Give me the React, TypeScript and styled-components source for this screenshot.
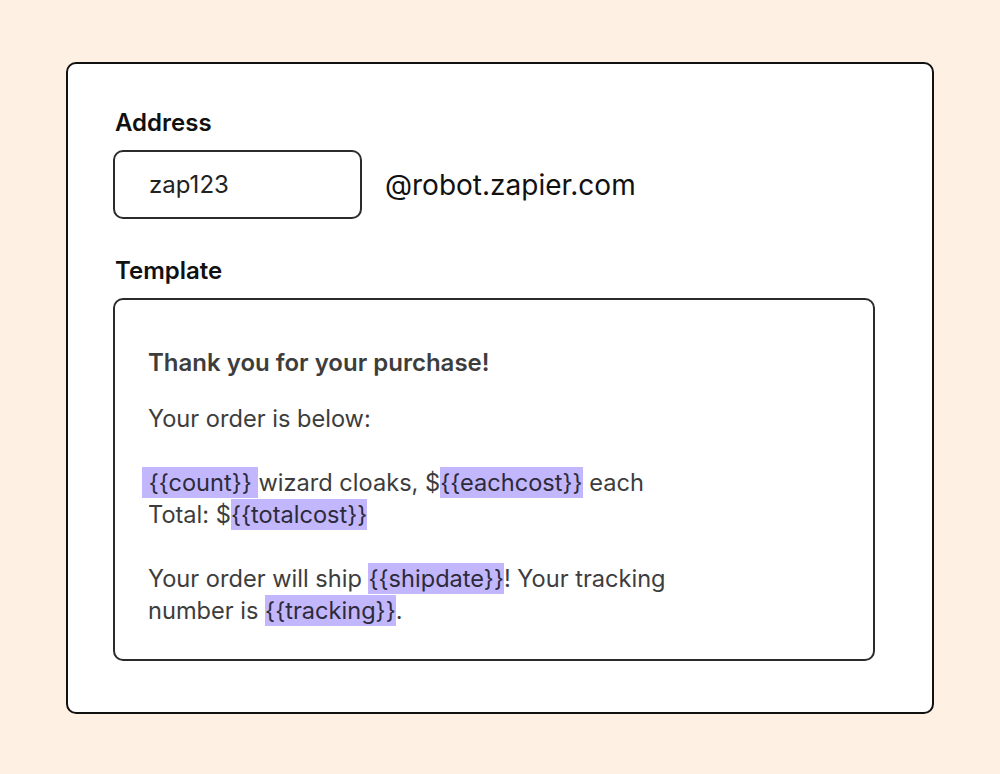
import styled, { createGlobalStyle } from 'styled-components';

const GlobalStyle = createGlobalStyle`
  html, body {
    margin: 0;
    padding: 0;
    background: #fef1e4;
  }
  * {
    box-sizing: border-box;
  }
`

export default function App() {
  return (
    <>
      <GlobalStyle />
      <Page>
        <Card>
          <FieldLabel>Address</FieldLabel>
          <AddressRow>
            <InputBox>zap123</InputBox>
            <Domain>@robot.zapier.com</Domain>
          </AddressRow>

          <FieldLabel>Template</FieldLabel>
          <TemplateBox>
            <Heading>Thank you for your purchase!</Heading>
            <Paragraph>Your order is below:</Paragraph>
            <Paragraph>
              <Highlight $lead>&nbsp;{'{{count}}'}&nbsp;</Highlight>wizard cloaks, $<Highlight>{'{{eachcost}}'}</Highlight> each
              <br />
              Total: $<Highlight>{'{{totalcost}}'}</Highlight>
            </Paragraph>
            <Paragraph>
              Your order will ship <Highlight>{'{{shipdate}}'}</Highlight>! Your tracking
              <br />
              number is <Highlight>{'{{tracking}}'}</Highlight>.
            </Paragraph>
          </TemplateBox>
        </Card>
      </Page>
    </>
  )
}

const Page = styled.div`
  width: 1000px;
  height: 774px;
  padding-top: 62px;
  display: flex;
  justify-content: center;
  align-items: flex-start;
  font-family: Inter, "Liberation Sans", sans-serif;
`

const Card = styled.div`
  width: 868px;
  height: 652px;
  background: #ffffff;
  border: 2px solid #111111;
  border-radius: 10px;
  padding: 45px 57px 0 45px;
  display: flex;
  flex-direction: column;
`

const FieldLabel = styled.div`
  font-size: 24px;
  line-height: 28px;
  font-weight: 600;
  color: #111111;
  margin-left: 2px;
  margin-bottom: 13px;
`

const AddressRow = styled.div`
  display: flex;
  align-items: center;
  gap: 23px;
  margin-bottom: 38px;
`

const InputBox = styled.div`
  width: 249px;
  height: 69px;
  border: 2px solid #2b2b2b;
  border-radius: 10px;
  padding-left: 34px;
  display: flex;
  align-items: center;
  font-size: 24px;
  color: #222222;
`

const Domain = styled.div`
  font-size: 28px;
  color: #111111;
`

const TemplateBox = styled.div`
  width: 762px;
  height: 363px;
  border: 2px solid #2b2b2b;
  border-radius: 10px;
  padding: 47px 33px 0 33px;
  color: #3d3d3d;
  font-size: 23.6px;
  line-height: 32px;
`

const Heading = styled.div`
  font-weight: 600;
  font-size: 24px;
  margin-bottom: 24px;
`

const Paragraph = styled.p`
  margin: 0 0 32px 0;
`

const Highlight = styled.span<{ $lead?: boolean }>`
  background: #c2b7fc;
  color: #2d2a3a;
  padding: 1px 0;
  margin-left: ${p => (p.$lead ? '-6px' : '0')};
`
